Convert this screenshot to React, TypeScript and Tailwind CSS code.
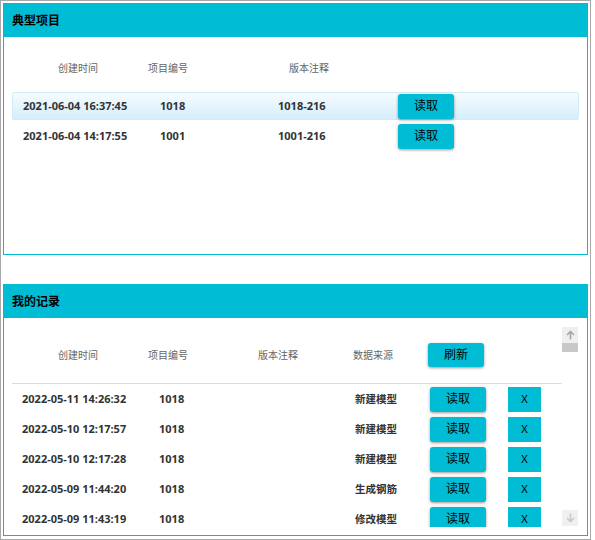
import React from "react"

const typical = [
  { time: "2021-06-04 16:37:45", id: "1018", note: "1018-216", active: true },
  { time: "2021-06-04 14:17:55", id: "1001", note: "1001-216", active: false },
]

const records = [
  { time: "2022-05-11 14:26:32", id: "1018", source: "新建模型" },
  { time: "2022-05-10 12:17:57", id: "1018", source: "新建模型" },
  { time: "2022-05-10 12:17:28", id: "1018", source: "新建模型" },
  { time: "2022-05-09 11:44:20", id: "1018", source: "生成钢筋" },
  { time: "2022-05-09 11:43:19", id: "1018", source: "修改模型" },
]

function ReadButton({ label = "读取" }: { label?: string }) {
  return (
    <button className="w-[56px] h-[25px] shrink-0 rounded-[3px] bg-[#00bcd4] text-[12px] font-normal text-black shadow-[0_1px_3px_rgba(0,0,0,0.4)] flex items-center justify-center">
      {label}
    </button>
  )
}

function Arrow({ up, color }: { up?: boolean; color: string }) {
  return (
    <svg width="9" height="10" viewBox="0 0 9 10" className={up ? "" : "rotate-180"}>
      <path d="M4.5 1.5V9.5M1 5L4.5 1.5L8 5" fill="none" stroke={color} strokeWidth="1.6" />
    </svg>
  )
}

function PanelHeader({ title }: { title: string }) {
  return (
    <div className="h-[33px] shrink-0 bg-[#00bcd4] flex items-center pl-2 text-[12px] font-bold text-black">
      {title}
    </div>
  )
}

export default function App() {
  return (
    <div className="w-[591px] h-[540px] border border-[#a8a8a8] p-[2px] bg-white font-['Noto_Sans','Noto_Sans_CJK_SC',sans-serif]">
      {/* 典型项目 */}
      <div className="h-[252px] border border-[#00bcd4] flex flex-col">
        <PanelHeader title="典型项目" />
        <div className="px-2 pt-[24px]">
          <div className="flex h-[14px] items-center pl-[46px] text-[10px] text-[#666]">
            <div className="w-[90px]">创建时间</div>
            <div className="w-[141px]">项目编号</div>
            <div>版本注释</div>
          </div>
          <div className="mt-[17px] flex flex-col gap-[2px]">
            {typical.map((r) => (
              <div
                key={r.time}
                className={
                  r.active
                    ? "h-[28px] flex items-center pl-[10px] text-[11px] font-bold text-[#333] rounded-[2px] border border-[#d2ebf7] bg-gradient-to-b from-[#f6fcff] to-[#d4eefb]"
                    : "h-[28px] flex items-center pl-[10px] text-[11px] font-bold text-[#333] border border-transparent"
                }
              >
                <div className="w-[137px]">{r.time}</div>
                <div className="w-[118px]">{r.id}</div>
                <div className="w-[120px]">{r.note}</div>
                <ReadButton />
              </div>
            ))}
          </div>
        </div>
      </div>

      {/* 我的记录 */}
      <div className="mt-[29px] h-[252px] border border-[#00bcd4] flex flex-col">
        <PanelHeader title="我的记录" />
        <div className="flex pl-2 pr-[9px] pt-[9px]">
          <div className="w-[550px] h-[200px] overflow-hidden">
            <div className="h-[57px] flex items-start pt-[16px] border-b border-[#dcdcdc] text-[10px] text-[#666]">
              <div className="h-[24px] flex items-center pl-[46px] w-[136px]">创建时间</div>
              <div className="h-[24px] flex items-center w-[110px]">项目编号</div>
              <div className="h-[24px] flex items-center w-[95px]">版本注释</div>
              <div className="h-[24px] flex items-center w-[75px]">数据来源</div>
              <button className="w-[56px] h-[24px] rounded-[3px] bg-[#00bcd4] text-[12px] text-black shadow-[0_1px_3px_rgba(0,0,0,0.4)]">
                刷新
              </button>
            </div>
            {records.map((r) => (
              <div key={r.time} className="h-[30px] flex items-center pl-[10px] text-[11px] font-bold text-[#333]">
                <div className="w-[137px] shrink-0">{r.time}</div>
                <div className="w-[171px] shrink-0">{r.id}</div>
                <div className="w-[92px] shrink-0 pt-[2px] text-center text-[10.5px]">{r.source}</div>
                <div className="ml-[8px]">
                  <ReadButton />
                </div>
                <button className="ml-[22px] w-[33px] h-[25px] shrink-0 bg-[#00bcd4] text-[11px] font-normal text-black">
                  X
                </button>
              </div>
            ))}
          </div>
          {/* scrollbar */}
          <div className="w-[16px] h-[200px] flex flex-col">
            <div className="h-[16px] bg-[#efefef] flex items-center justify-center">
              <Arrow up color="#a6a6a6" />
            </div>
            <div className="h-[9px] bg-[#c8c8c8]" />
            <div className="flex-1" />
            <div className="h-[16px] mb-[1px] bg-[#f0f0f0] flex items-center justify-center">
              <Arrow color="#c9c9c9" />
            </div>
          </div>
        </div>
      </div>
    </div>
  )
}
